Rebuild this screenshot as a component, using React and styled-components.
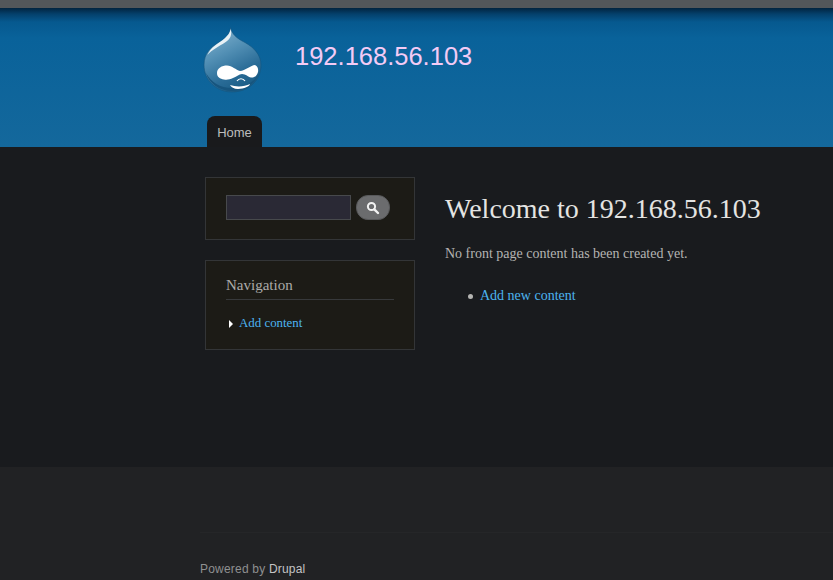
import React from 'react';
import styled, { createGlobalStyle } from 'styled-components';

const GlobalStyle = createGlobalStyle`
  html, body {
    margin: 0;
    padding: 0;
    background: #191b1e;
  }
  a {
    text-decoration: none;
    color: #4cb4f0;
  }
`;

const Page = styled.div`
  width: 833px;
  height: 580px;
  overflow: hidden;
  display: flex;
  flex-direction: column;
  font-family: "Liberation Serif", serif;
`;

const TopBar = styled.div`
  height: 8px;
  background: #53575a;
`;

const Header = styled.header`
  height: 139px;
  padding-left: 203px;
  background: linear-gradient(to bottom, #02243f 0, #04406b 6px, #06598f 14px, #09629a 30px, #14689c 100%);
  display: flex;
  flex-direction: column;
`;

const Branding = styled.div`
  display: flex;
  align-items: flex-start;
  height: 108px;
`;

const Logo = styled.svg`
  width: 60px;
  height: 66px;
  margin-top: 19px;
  flex: none;
`;

const SiteName = styled.h1`
  margin: 33px 0 0 32px;
  font: 400 25.5px/30px "Liberation Sans", sans-serif;
  color: #f3cbf5;
`;

const Tab = styled.a`
  width: 55px;
  height: 31px;
  margin-left: 4px;
  box-sizing: border-box;
  padding-top: 9px;
  border-radius: 8px 8px 0 0;
  background: #191a1c;
  color: #bdbdbd;
  font: 400 13px/15px "Liberation Sans", sans-serif;
  text-align: center;
`;

const Main = styled.main`
  height: 320px;
  box-sizing: border-box;
  padding: 30px 0 0 205px;
  background: #191b1e;
  display: flex;
  gap: 30px;
`;

const Sidebar = styled.aside`
  width: 210px;
  display: flex;
  flex-direction: column;
  gap: 20px;
`;

const Block = styled.section`
  box-sizing: border-box;
  width: 210px;
  height: ${(p) => p.$height}px;
  padding: ${(p) => p.$pad};
  background: #1c1b16;
  border: 1px solid #333537;
`;

const SearchRow = styled.form`
  display: flex;
  gap: 5px;
  margin: 0;
`;

const SearchInput = styled.div`
  box-sizing: border-box;
  width: 125px;
  height: 25px;
  background: #2a2935;
  border: 1px solid #47494c;
`;

const SearchButton = styled.button`
  width: 34px;
  height: 25px;
  padding: 0;
  border: 1px solid #58595b;
  border-radius: 12px;
  background: #6b6c6e;
  display: flex;
  align-items: center;
  justify-content: center;
`;

const BlockTitle = styled.h2`
  margin: 0;
  height: 24px;
  box-sizing: border-box;
  border-bottom: 1px solid #37393b;
  color: #acacaa;
  font: 400 15px/18px "Liberation Serif", serif;
`;

const NavItem = styled.div`
  margin-top: 15px;
  display: flex;
  align-items: center;
  gap: 6px;
  padding-left: 3px;
  font-size: 12.9px;
  line-height: 16px;
`;

const Arrow = styled.span`
  width: 0;
  height: 0;
  border-left: 4px solid #fff;
  border-top: 4px solid transparent;
  border-bottom: 4px solid transparent;
  margin-top: 1px;
`;

const Content = styled.article`
  display: flex;
  flex-direction: column;
`;

const PageTitle = styled.h1`
  margin: 0;
  padding-top: 16px;
  color: #e4e4e2;
  font: 400 28px/32px "Liberation Serif", serif;
`;

const Message = styled.p`
  margin: 20px 0 0;
  color: #b4b4b2;
  font-size: 14px;
  line-height: 18px;
`;

const Links = styled.ul`
  margin: 24px 0 0;
  padding: 0 0 0 35px;
  list-style: none;
  font-size: 14px;
  line-height: 18px;
`;

const LinkItem = styled.li`
  position: relative;

  &::before {
    content: "";
    position: absolute;
    left: -12px;
    top: 7px;
    width: 5px;
    height: 5px;
    border-radius: 50%;
    background: #b5b5b3;
  }
`;

const Footer = styled.footer`
  flex: 1;
  background: #212224;
  display: flex;
  flex-direction: column;
  padding-left: 200px;
`;

const FooterRule = styled.div`
  margin-top: 65px;
  height: 1px;
  background: #252628;
`;

const Credit = styled.div`
  margin-top: 29px;
  color: #8f9091;
  font: 400 12px/15px "Liberation Sans", sans-serif;
  letter-spacing: 0.2px;

  a {
    color: #c4c4c4;
  }
`;

function DrupalLogo() {
  return (
    <Logo viewBox="0 0 60 66">
      <defs>
        <linearGradient id="drop" x1="0.15" y1="0" x2="0.6" y2="1">
          <stop offset="0" stopColor="#86b5d1" />
          <stop offset="0.4" stopColor="#5390b5" />
          <stop offset="0.75" stopColor="#2a6c97" />
          <stop offset="1" stopColor="#1a5c85" />
        </linearGradient>
      </defs>
      <path
        d="M27.5 0.5C29 7 33 11 42 15.5C51 20.5 58 28 58 38C58 54 45 65 29 65C13 65 1 53 1 38C1 26 8 20 16 15.5C23 11.5 27 7 27.5 0.5Z"
        fill="url(#drop)"
        stroke="#14557f"
        strokeWidth="0.6"
      />
      <path d="M27.5 2C27 9 18 14 12 18.5C8 21.5 5.5 25 4.5 28C9 22.5 16 19.5 22 15.5C27 12.5 29.5 8 27.5 2Z" fill="#e8f1f6" />
      <path d="M3 46C6 56 16 64 29 64C42 64 52 57 56 46C52 54 43 61 29 61C17 61 8 55 3 46Z" fill="#17557e" />
      <path
        d="M14 46C14 41 19 38.5 24 38.5C29 38.5 33 43 37 44C42 44 48 38 52 38C55 39 55.5 43 55 45C54 49 51 51 48 50.5C45 50 43 47 39 47C36 47 33 50 30 51C27 52.5 24 53 21 52.5C17 52 14 50 14 46Z"
        fill="#ffffff"
      />
      <path d="M34 54C36 51 40 51 42 54" fill="none" stroke="#ffffff" strokeWidth="1.2" />
      <path d="M27 58C33 60 41 60 47 57C47 59 41 62 35 62C31 62 28 60 27 58Z" fill="#ffffff" />
    </Logo>
  );
}

function SearchIcon() {
  return (
    <svg width="14" height="14" viewBox="0 0 14 14">
      <circle cx="5.5" cy="5.5" r="3.6" fill="none" stroke="#f2f2f2" strokeWidth="2" />
      <path d="M8.3 8.3L12 12" stroke="#f2f2f2" strokeWidth="2.4" strokeLinecap="round" />
    </svg>
  );
}

export default function App() {
  return (
    <Page>
      <GlobalStyle />
      <TopBar />
      <Header>
        <Branding>
          <DrupalLogo />
          <SiteName>192.168.56.103</SiteName>
        </Branding>
        <Tab href="#">Home</Tab>
      </Header>
      <Main>
        <Sidebar>
          <Block $height={63} $pad="17px 20px">
            <SearchRow>
              <SearchInput />
              <SearchButton type="button">
                <SearchIcon />
              </SearchButton>
            </SearchRow>
          </Block>
          <Block $height={90} $pad="15px 20px">
            <BlockTitle>Navigation</BlockTitle>
            <NavItem>
              <Arrow />
              <a href="#">Add content</a>
            </NavItem>
          </Block>
        </Sidebar>
        <Content>
          <PageTitle>Welcome to 192.168.56.103</PageTitle>
          <Message>No front page content has been created yet.</Message>
          <Links>
            <LinkItem>
              <a href="#">Add new content</a>
            </LinkItem>
          </Links>
        </Content>
      </Main>
      <Footer>
        <FooterRule />
        <Credit>
          Powered by <a href="#">Drupal</a>
        </Credit>
      </Footer>
    </Page>
  );
}
